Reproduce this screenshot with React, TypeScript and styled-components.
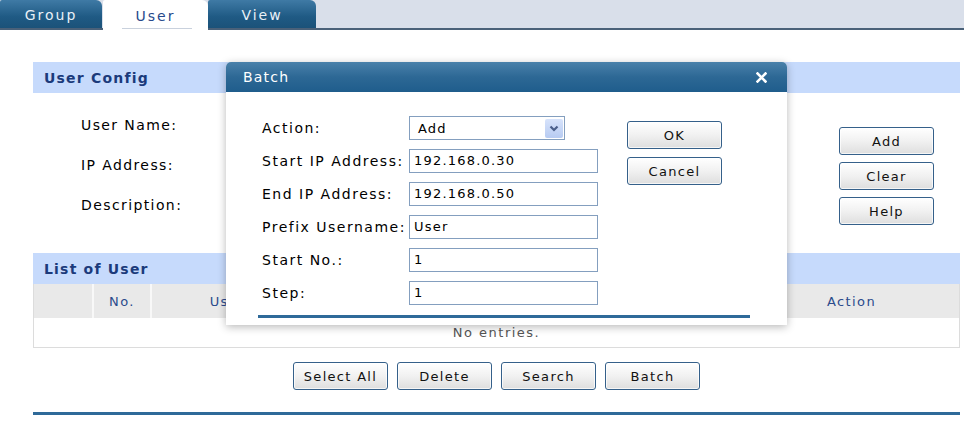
import React from "react";
import styled, { createGlobalStyle, css } from "styled-components";

const GlobalStyle = createGlobalStyle`
  html, body {
    margin: 0;
    padding: 0;
    background: #ffffff;
  }
  body {
    font-family: "DejaVu Sans", Verdana, sans-serif;
    font-size: 14px;
    letter-spacing: 1.4px;
    color: #000;
  }
`;

const Page = styled.div`
  position: relative;
  width: 964px;
  height: 421px;
  overflow: hidden;
`;

const TabBar = styled.div`
  display: flex;
  align-items: flex-end;
  height: 28px;
  background: #d9dfea;
  border-bottom: 2px solid #4a6179;
`;

const Tab = styled.div<{ $active?: boolean; $width: number }>`
  position: relative;
  width: ${(p) => p.$width}px;
  height: 28px;
  display: flex;
  align-items: center;
  justify-content: center;
  font-size: 14px;
  letter-spacing: 2px;
  padding-top: 1px;
  box-sizing: border-box;
  border-radius: 2px 6px 0 0;
  ${(p) =>
    p.$active
      ? css`
          background: #ffffff;
          color: #274a8c;
          height: 30px;
          margin-bottom: -2px;
          margin-left: 1px;
          &::after {
            content: "";
            position: absolute;
            left: 19px;
            right: 16px;
            bottom: 1px;
            height: 1px;
            background: #c9d1dd;
          }
        `
      : css`
          background: linear-gradient(#3f7aa5, #1f5a84 60%, #1b5279);
          color: #e9f0f7;
        `}
`;

const Content = styled.div`
  padding: 32px 4px 0 33px;
`;

const SectionHeader = styled.div`
  height: 31px;
  line-height: 32px;
  padding-left: 11px;
  background: #c6dafc;
  color: #1b3a7b;
  font-weight: bold;
  font-size: 14px;
  letter-spacing: 1.2px;
`;

const ConfigArea = styled.div`
  height: 160px;
  display: flex;
  justify-content: space-between;
`;

const LabelColumn = styled.div`
  padding: 12px 0 0 48px;
  display: flex;
  flex-direction: column;
`;

const FieldLabel = styled.div`
  height: 40px;
  line-height: 40px;
`;

const SideButtons = styled.div`
  display: flex;
  flex-direction: column;
  gap: 7px;
  padding-top: 34px;
  margin-right: 26px;
`;

const Button = styled.button`
  width: 95px;
  height: 28px;
  padding: 0;
  font-family: "DejaVu Sans", Verdana, sans-serif;
  font-size: 13px;
  letter-spacing: 1.3px;
  color: #111;
  border: 1px solid #35608a;
  border-radius: 3px;
  background: linear-gradient(#ffffff, #f1f1f1 50%, #dedede);
  box-shadow: inset 0 0 0 1px rgba(255, 255, 255, 0.7);
  cursor: pointer;
`;

const Table = styled.div`
  border: 1px solid #dcdcdc;
  border-top: none;
`;

const HeaderRow = styled.div`
  display: flex;
  height: 34px;
  background: #e9e9e9;
`;

const HeadCell = styled.div<{ $width?: number; $divider?: boolean }>`
  ${(p) => (p.$width ? `width: ${p.$width}px;` : "flex: 1;")}
  display: flex;
  align-items: center;
  justify-content: center;
  font-size: 13px;
  color: #2b4b8c;
  box-sizing: border-box;
  ${(p) => p.$divider && "border-left: 2px solid #f8f8f8;"}
`;

const EmptyRow = styled.div`
  height: 29px;
  line-height: 30px;
  text-align: center;
  font-size: 13px;
  letter-spacing: 1.5px;
  color: #555;
  background: #fff;
`;

const ButtonRow = styled.div`
  display: flex;
  justify-content: center;
  gap: 9px;
  margin-top: 14px;
`;

const BottomRule = styled.div`
  margin-top: 22px;
  height: 3px;
  background: #2f6a99;
`;

const Dialog = styled.div`
  position: absolute;
  left: 226px;
  top: 62px;
  width: 561px;
  height: 263px;
  background: #fff;
  border-radius: 5px 5px 0 0;
  box-shadow: 0 2px 9px rgba(0, 0, 0, 0.28);
  display: flex;
  flex-direction: column;
`;

const DialogTitle = styled.div`
  height: 30px;
  display: flex;
  align-items: center;
  justify-content: space-between;
  padding: 0 20px 0 17px;
  border-radius: 5px 5px 0 0;
  background: linear-gradient(#4a81aa, #2d6895 50%, #1f5d8c);
  color: #fff;
  font-size: 14px;
  letter-spacing: 1.2px;
`;

const CloseIcon = styled.svg`
  width: 11px;
  height: 11px;
  display: block;
`;

const DialogBody = styled.div`
  padding: 24px 0 0 32px;
`;

const FormRow = styled.div`
  display: flex;
  align-items: flex-start;
`;

const FormGrid = styled.div`
  padding-left: 4px;
  display: grid;
  grid-template-columns: 147px 189px;
  row-gap: 9px;
  align-items: center;
`;

const DialogLabel = styled.div`
  height: 24px;
  line-height: 24px;
  white-space: nowrap;
  letter-spacing: 1.5px;
`;

const TextField = styled.div`
  height: 24px;
  box-sizing: border-box;
  border: 1px solid #849fbf;
  padding-left: 4px;
  line-height: 22px;
  font-size: 13px;
  letter-spacing: 1.2px;
  background: #fff;
`;

const SelectBox = styled.div`
  width: 156px;
  height: 24px;
  box-sizing: border-box;
  border: 1px solid #849fbf;
  display: flex;
  align-items: center;
  justify-content: space-between;
  padding: 0 1px 0 8px;
  font-size: 13px;
  letter-spacing: 1.2px;
`;

const SelectArrow = styled.div`
  width: 18px;
  height: 19px;
  border-radius: 2px;
  background: linear-gradient(#d7e3fb, #b7cbf2);
  display: flex;
  align-items: center;
  justify-content: center;
`;

const DialogButtons = styled.div`
  display: flex;
  flex-direction: column;
  gap: 8px;
  margin-left: 29px;
  padding-top: 5px;
`;

const DialogRule = styled.div`
  margin-top: 10px;
  width: 492px;
  height: 3px;
  background: #2f6a99;
`;

const dialogFields = [
  { label: "Start IP Address:", value: "192.168.0.30" },
  { label: "End IP Address:", value: "192.168.0.50" },
  { label: "Prefix Username:", value: "User" },
  { label: "Start No.:", value: "1" },
  { label: "Step:", value: "1" },
];

export default function App() {
  return (
    <Page>
      <GlobalStyle />
      <TabBar>
        <Tab $width={102}>Group</Tab>
        <Tab $width={105} $active>
          User
        </Tab>
        <Tab $width={108}>View</Tab>
      </TabBar>

      <Content>
        <SectionHeader>User Config</SectionHeader>
        <ConfigArea>
          <LabelColumn>
            <FieldLabel>User Name:</FieldLabel>
            <FieldLabel>IP Address:</FieldLabel>
            <FieldLabel>Description:</FieldLabel>
          </LabelColumn>
          <SideButtons>
            <Button>Add</Button>
            <Button>Clear</Button>
            <Button>Help</Button>
          </SideButtons>
        </ConfigArea>

        <SectionHeader>List of User</SectionHeader>
        <Table>
          <HeaderRow>
            <HeadCell $width={58} />
            <HeadCell $width={58} $divider>
              No.
            </HeadCell>
            <HeadCell $width={202} $divider>
              User Name
            </HeadCell>
            <HeadCell $width={210} $divider />
            <HeadCell $width={182} $divider />
            <HeadCell>Action</HeadCell>
          </HeaderRow>
          <EmptyRow>No entries.</EmptyRow>
        </Table>

        <ButtonRow>
          <Button>Select All</Button>
          <Button>Delete</Button>
          <Button>Search</Button>
          <Button>Batch</Button>
        </ButtonRow>
        <BottomRule />
      </Content>

      <Dialog>
        <DialogTitle>
          <span>Batch</span>
          <CloseIcon viewBox="0 0 11 11">
            <path d="M1.5 1.5 L9.5 9.5 M9.5 1.5 L1.5 9.5" stroke="#fff" strokeWidth="2.6" strokeLinecap="square" />
          </CloseIcon>
        </DialogTitle>
        <DialogBody>
          <FormRow>
            <FormGrid>
              <DialogLabel>Action:</DialogLabel>
              <SelectBox>
                <span>Add</span>
                <SelectArrow>
                  <svg width="10" height="7" viewBox="0 0 10 7">
                    <path d="M1.5 1.5 L5 5 L8.5 1.5" fill="none" stroke="#4a5f8a" strokeWidth="2.2" />
                  </svg>
                </SelectArrow>
              </SelectBox>
              {dialogFields.map((f) => (
                <React.Fragment key={f.label}>
                  <DialogLabel>{f.label}</DialogLabel>
                  <TextField>{f.value}</TextField>
                </React.Fragment>
              ))}
            </FormGrid>
            <DialogButtons>
              <Button>OK</Button>
              <Button>Cancel</Button>
            </DialogButtons>
          </FormRow>
          <DialogRule />
        </DialogBody>
      </Dialog>
    </Page>
  );
}
